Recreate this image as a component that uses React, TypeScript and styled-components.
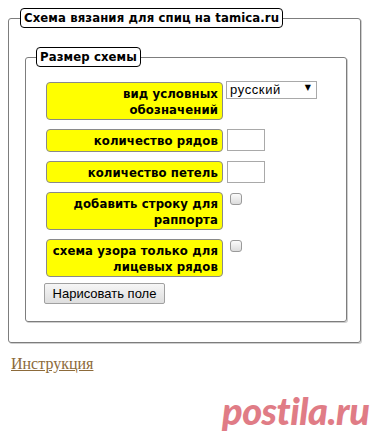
import React from "react";
import styled, { createGlobalStyle } from "styled-components";

const Global = createGlobalStyle`
  html, body { margin: 0; padding: 0; background: #fff; }
  body { margin: 8px; font-family: "Liberation Serif", "Times New Roman", serif; position: relative; min-height: 423px; }
`;

const OuterSet = styled.fieldset`
  box-sizing: border-box;
  width: 353px;
  margin: 0;
  padding: 0 10px 20px 11px;
  border: 1px solid #7d7d7d;
  border-radius: 3px;
  box-shadow: 1px 1px 0 #cfcfcf;
  min-inline-size: 0;
`;

const InnerSet = styled.fieldset`
  box-sizing: border-box;
  margin: 19px 3px 0 5px;
  padding: 0 10px 17px 10px;
  border: 1px solid #7d7d7d;
  border-radius: 3px;
  box-shadow: 1px 1px 0 #cfcfcf;
  min-inline-size: 0;
`;

const boldFace = `
  font-family: "DejaVu Sans Condensed", "DejaVu Sans", Verdana, sans-serif;
  font-stretch: condensed;
  font-weight: bold;
  font-size: 13px;
  letter-spacing: 0.1px;
`;

const Legend = styled.legend`
  margin: 0;
  padding: 1px 3px 2px;
  height: 20px;
  box-sizing: border-box;
  border: 1px solid #000;
  border-radius: 4px;
  background: #fff;
  ${boldFace}
  line-height: 16px;
  color: #000;
  white-space: nowrap;
`;

const Grid = styled.div`
  display: grid;
  grid-template-columns: 177px auto;
  column-gap: 3px;
  row-gap: 9px;
  margin: 15px 0 0 10px;
  align-items: start;
`;

const Label = styled.div`
  box-sizing: border-box;
  background: #ffff00;
  border: 1px solid #8a8a8a;
  border-radius: 4px;
  padding: 3px 4px 2px 2px;
  text-align: right;
  white-space: nowrap;
  ${boldFace}
  line-height: 15.5px;
  color: #000;
`;

const Control = styled.div`
  display: flex;
  align-items: flex-start;
`;

const SelectWrap = styled.div`
  position: relative;
  width: 91px;
  height: 18px;
  margin-top: -2px;
`;

const Select = styled.select`
  appearance: none;
  -webkit-appearance: none;
  box-sizing: border-box;
  width: 91px;
  height: 18px;
  margin: 0;
  padding: 0 0 0 3px;
  border: 1px solid #a9a9a9;
  border-radius: 0;
  background: #fff;
  font-family: "Liberation Sans", Arial, sans-serif;
  font-size: 13px;
  letter-spacing: 0.6px;
  line-height: 16px;
  color: #000;
  outline: none;
`;

const Arrow = styled.span`
  position: absolute;
  right: 6px;
  top: 3px;
  font-size: 8px;
  line-height: 10px;
  color: #000;
  pointer-events: none;
  font-family: "DejaVu Sans", sans-serif;
`;

const TextInput = styled.input`
  box-sizing: border-box;
  width: 38px;
  height: 22px;
  margin: 0 0 0 1px;
  padding: 0 2px;
  border: 1px solid #a9a9a9;
  background: #fff;
  outline: none;
`;

const Check = styled.input`
  appearance: none;
  -webkit-appearance: none;
  box-sizing: border-box;
  width: 12px;
  height: 12px;
  margin: 1px 0 0 4px;
  border: 1px solid #9a9a9a;
  border-radius: 3px;
  background: linear-gradient(#fbfbfb, #dcdcdc);
`;

const Button = styled.button`
  box-sizing: border-box;
  height: 21px;
  width: 121px;
  margin: 6px 0 0 8px;
  padding: 0 6px;
  border: 1px solid #a0a0a0;
  border-radius: 2px;
  background: linear-gradient(#f6f6f6, #dedede);
  font-family: "Liberation Sans", Arial, sans-serif;
  font-size: 13px;
  line-height: 17px;
  color: #000;
`;

const Help = styled.a`
  display: inline-block;
  margin: 12px 0 0 3px;
  font-family: "Liberation Serif", "Times New Roman", serif;
  font-size: 16px;
  color: #8c6a3a;
  text-decoration: underline;
`;

const Watermark = styled.div`
  position: absolute;
  left: 214px;
  top: 379px;
  font-family: "Lato", "DejaVu Sans", sans-serif;
  font-weight: 900;
  font-style: italic;
  font-size: 38px;
  letter-spacing: -0.5px;
  color: #e07c86;
  pointer-events: none;
`;

const rows: { label: React.ReactNode; kind: "select" | "text" | "check" }[] = [
  { label: <>вид условных<br />обозначений</>, kind: "select" },
  { label: "количество рядов", kind: "text" },
  { label: "количество петель", kind: "text" },
  { label: <>добавить строку для<br />раппорта</>, kind: "check" },
  { label: <>схема узора только для<br />лицевых рядов</>, kind: "check" },
];

export default function App() {
  return (
    <>
      <Global />
      <OuterSet>
        <Legend>Схема вязания для спиц на tamica.ru</Legend>
        <InnerSet>
          <Legend>Размер схемы</Legend>
          <Grid>
            {rows.map((r, i) => (
              <React.Fragment key={i}>
                <Label>{r.label}</Label>
                <Control>
                  {r.kind === "select" && (
                    <SelectWrap>
                      <Select defaultValue="ru">
                        <option value="ru">русский</option>
                      </Select>
                      <Arrow>▼</Arrow>
                    </SelectWrap>
                  )}
                  {r.kind === "text" && <TextInput type="text" />}
                  {r.kind === "check" && <Check type="checkbox" />}
                </Control>
              </React.Fragment>
            ))}
          </Grid>
          <Button type="button">Нарисовать поле</Button>
        </InnerSet>
      </OuterSet>
      <Help href="#">Инструкция</Help>
      <Watermark>postila.ru</Watermark>
    </>
  );
}
